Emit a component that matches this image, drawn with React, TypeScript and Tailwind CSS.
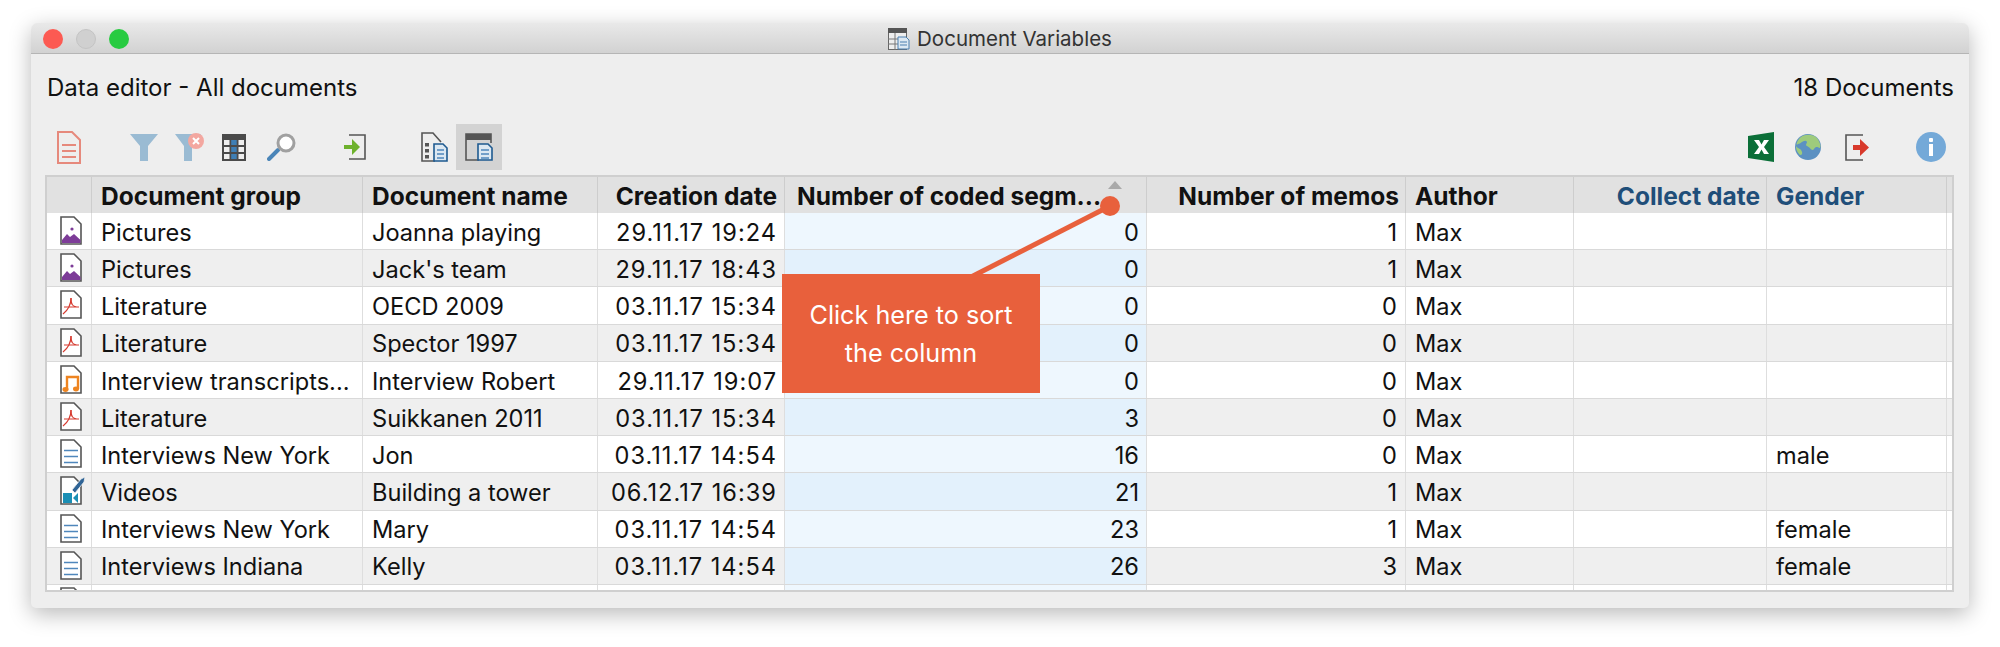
import React from "react";

type Kind = "picture" | "pdf" | "audio" | "text" | "video";

type Row = {
  kind: Kind;
  group: string;
  name: string;
  date: string;
  coded: number;
  memos: number;
  gender: string;
};

const rows: Row[] = [
  { kind: "picture", group: "Pictures", name: "Joanna playing", date: "29.11.17 19:24", coded: 0, memos: 1, gender: "" },
  { kind: "picture", group: "Pictures", name: "Jack's team", date: "29.11.17 18:43", coded: 0, memos: 1, gender: "" },
  { kind: "pdf", group: "Literature", name: "OECD 2009", date: "03.11.17 15:34", coded: 0, memos: 0, gender: "" },
  { kind: "pdf", group: "Literature", name: "Spector 1997", date: "03.11.17 15:34", coded: 0, memos: 0, gender: "" },
  { kind: "audio", group: "Interview transcripts...", name: "Interview Robert", date: "29.11.17 19:07", coded: 0, memos: 0, gender: "" },
  { kind: "pdf", group: "Literature", name: "Suikkanen 2011", date: "03.11.17 15:34", coded: 3, memos: 0, gender: "" },
  { kind: "text", group: "Interviews New York", name: "Jon", date: "03.11.17 14:54", coded: 16, memos: 0, gender: "male" },
  { kind: "video", group: "Videos", name: "Building a tower", date: "06.12.17 16:39", coded: 21, memos: 1, gender: "" },
  { kind: "text", group: "Interviews New York", name: "Mary", date: "03.11.17 14:54", coded: 23, memos: 1, gender: "female" },
  { kind: "text", group: "Interviews Indiana", name: "Kelly", date: "03.11.17 14:54", coded: 26, memos: 3, gender: "female" },
];

const FileIcon = ({ kind }: { kind: Kind }) => (
  <svg width="26" height="30" viewBox="0 0 26 30" fill="none" className="overflow-visible">
    <path d="M1 1H14L21 8V28H1Z" fill="#fff" stroke="#555" strokeWidth="1.6" />
    {kind === "picture" && (
      <>
        <path d="M2 27V24L7 18L10 21L14 18L20.5 24V27Z" fill="#7D3C98" />
        <circle cx="12" cy="13" r="1.6" fill="#7D3C98" />
      </>
    )}
    {kind === "pdf" && (
      <>
        <path d="M11 8C11 14 12 17 19 17H4" stroke="#D63A2F" strokeWidth="1.2" />
        <path d="M11 8C11 15 8 20 3 24" stroke="#D63A2F" strokeWidth="1.2" />
      </>
    )}
    {kind === "audio" && (
      <>
        <path d="M7 25V12H18V24" stroke="#EE8420" strokeWidth="2.4" />
        <ellipse cx="5.5" cy="24.5" rx="3" ry="2.4" fill="#EE8420" />
        <ellipse cx="16" cy="24" rx="3" ry="2.4" fill="#EE8420" />
      </>
    )}
    {kind === "text" && (
      <path d="M4 11.5H18M4 17.5H18M4 23.5H18" stroke="#4F87BC" strokeWidth="1.5" />
    )}
    {kind === "video" && (
      <>
        <path d="M3 17H12V27H3Z" fill="#1B8FB5" />
        <path d="M13 22L18 17V27Z" fill="#1B8FB5" />
        <path d="M12 14L21 3L25 1L24 6L15 17Z" fill="#2F6496" stroke="#EFEFEF" strokeWidth="0.8" />
      </>
    )}
  </svg>
);

const DocRed = () => (
  <svg width="24" height="33" viewBox="0 0 24 33" fill="none">
    <path d="M1 1H15L23 9V32H1Z" stroke="#E6897C" strokeWidth="2" />
    <path d="M5 14H19M5 20H19M5 26H19" stroke="#E6897C" strokeWidth="2" />
  </svg>
);

const FilterIcon = () => (
  <svg width="28" height="27" viewBox="0 0 28 27">
    <path d="M0 0H28L18 12V27H10V12Z" fill="#9ABBD3" />
  </svg>
);

const FilterClearIcon = () => (
  <svg width="29" height="28" viewBox="0 0 29 28">
    <path d="M0 1H26L17 13V28H9V13Z" fill="#9ABBD3" />
    <circle cx="21" cy="8" r="8" fill="#F3A7A0" />
    <path d="M18 5L24 11M24 5L18 11" stroke="#fff" strokeWidth="2" />
  </svg>
);

const GridIcon = () => (
  <svg width="24" height="27" viewBox="0 0 24 27">
    <rect width="24" height="27" fill="#4A4A4A" />
    <rect x="2" y="6" width="5.5" height="5" fill="#EEE" />
    <rect x="9.2" y="6" width="5.5" height="5" fill="#3F7FB5" />
    <rect x="16.5" y="6" width="5.5" height="5" fill="#EEE" />
    <rect x="2" y="13" width="5.5" height="5" fill="#EEE" />
    <rect x="9.2" y="13" width="5.5" height="5" fill="#3F7FB5" />
    <rect x="16.5" y="13" width="5.5" height="5" fill="#EEE" />
    <rect x="2" y="20" width="5.5" height="5" fill="#EEE" />
    <rect x="9.2" y="20" width="5.5" height="5" fill="#3F7FB5" />
    <rect x="16.5" y="20" width="5.5" height="5" fill="#EEE" />
  </svg>
);

const SearchIcon = () => (
  <svg width="29" height="28" viewBox="0 0 29 28" fill="none">
    <path d="M2 26L11 17" stroke="#4A85B8" strokeWidth="4" strokeLinecap="round" />
    <circle cx="19" cy="10" r="8" fill="#fff" stroke="#A0A0A0" strokeWidth="3" />
  </svg>
);

const ImportIcon = () => (
  <svg width="22" height="26" viewBox="0 0 22 26" fill="none">
    <path d="M5 1H21V25H5" stroke="#555" strokeWidth="1.6" />
    <path d="M0 11H8V5L16 13L8 21V15H0Z" fill="#6DB12C" />
  </svg>
);

const DocVarIcon = () => (
  <svg width="27" height="30" viewBox="0 0 27 30" fill="none">
    <path d="M14 29H1V1H12L20 10" stroke="#555" strokeWidth="1.6" />
    <rect x="4" y="11" width="4" height="3.5" fill="#555" />
    <rect x="4" y="17" width="4" height="3.5" fill="#555" />
    <rect x="4" y="23" width="4" height="3.5" fill="#555" />
    <path d="M13 12H22L26 16V29H13Z" fill="#DCE8F2" stroke="#1E5A90" strokeWidth="1.6" />
    <path d="M16 18H23M16 22H23M16 26H23" stroke="#4F87BC" strokeWidth="1.5" />
  </svg>
);

const PanelIcon = () => (
  <svg width="28" height="28" viewBox="0 0 28 28" fill="none">
    <path d="M14 27H1V1H26V10" stroke="#555" strokeWidth="1.6" />
    <rect x="1" y="1" width="25" height="6" fill="#555" />
    <path d="M13 11H23L27 15V27H13Z" fill="#DCE8F2" stroke="#1E5A90" strokeWidth="1.6" />
    <path d="M16 17H24M16 21H24M16 25H24" stroke="#4F87BC" strokeWidth="1.5" />
  </svg>
);

const ExcelIcon = () => (
  <svg width="26" height="30" viewBox="0 0 26 30">
    <path d="M0 4L26 0V30L0 26Z" fill="#0B6F38" />
    <path d="M6 8L11 8L13.5 12.5L16 8L21 8L16 15L21 22H16L13.5 17.5L11 22H6L11 15Z" fill="#fff" />
  </svg>
);

const GlobeIcon = () => (
  <svg width="26" height="26" viewBox="0 0 26 26">
    <circle cx="13" cy="13" r="13" fill="#5C91C2" />
    <path d="M6 3C10 0 18 0 22 4C25 8 26 12 25 14C22 13 21 12 19 15C17 18 15 13 12 12C9 11 14 8 11 7C8 6 6 10 3 10C0 13 2 6 6 3Z" fill="#9ECB7C" />
    <path d="M1 12C3 15 6 14 7 18C8 21 5 22 4 20C2 18 1 15 1 12Z" fill="#9ECB7C" />
  </svg>
);

const ExportIcon = () => (
  <svg width="24" height="27" viewBox="0 0 24 27" fill="none">
    <path d="M18 1H1V26H18" stroke="#555" strokeWidth="1.6" />
    <path d="M8 11H15V5L24 13.5L15 22V16H8Z" fill="#D8392B" />
  </svg>
);

const InfoIcon = () => (
  <svg width="30" height="30" viewBox="0 0 30 30">
    <circle cx="15" cy="15" r="15" fill="#74A9D8" />
    <rect x="13" y="6" width="4" height="4" rx="1" fill="#fff" />
    <rect x="13" y="12" width="4" height="12" fill="#fff" />
  </svg>
);

const TableGridIcon = () => (
  <svg width="22" height="22" viewBox="0 0 22 22" fill="none">
    <rect x="0.5" y="0.5" width="18" height="21" fill="#EEE" stroke="#666" />
    <rect x="0" y="0" width="19" height="5" fill="#555" />
    <path d="M0 11H19M0 16H19M7 5V22" stroke="#777" />
    <path d="M10 9H18L21 12V21H10Z" fill="#DCE8F2" stroke="#4A7FAF" />
    <path d="M12 14H19M12 17H19" stroke="#4A7FAF" />
  </svg>
);

export default function App() {
  return (
    <div className="h-[647px] w-[2000px] overflow-hidden bg-white pl-[31px] pt-[23px] font-['Inter','Liberation_Sans',sans-serif] text-[#111]">
      <div className="relative h-[585px] w-[1938px] rounded-t-[7px] rounded-b-[5px] bg-[#eeeeee] shadow-[0_6px_22px_rgba(0,0,0,0.28)]">
        {/* title bar */}
        <div className="relative flex h-[31px] items-center justify-center rounded-t-[7px] border-b border-[#b5b5b5] bg-gradient-to-b from-[#e9e9e9] to-[#d2d2d2] pt-[2px] text-[20.5px] text-[#333]">
          <div className="absolute left-[12px] top-[6px] flex gap-[13px]">
            <span className="h-[20px] w-[20px] rounded-full bg-[#fc5a52]" />
            <span className="h-[20px] w-[20px] rounded-full border border-[#c4c4c4] bg-[#d0d0d0]" />
            <span className="h-[20px] w-[20px] rounded-full bg-[#28cb41]" />
          </div>
          <span className="mr-[7px]"><TableGridIcon /></span>
          <span>Document Variables</span>
        </div>

        <div className="flex h-[62px] items-center justify-between pl-[16px] pr-[15px] pt-[5px] text-[24px]">
          <span>Data editor - All documents</span>
          <span>18 Documents</span>
        </div>

        {/* toolbar */}
        <div className="mt-[8px] flex h-[46px] items-center text-[0px]">
          <div className="ml-[26px] flex items-center">
            <DocRed />
            <span className="ml-[49px]"><FilterIcon /></span>
            <span className="ml-[17px]"><FilterClearIcon /></span>
            <span className="ml-[18px]"><GridIcon /></span>
            <span className="ml-[21px]"><SearchIcon /></span>
            <span className="ml-[48px]"><ImportIcon /></span>
            <span className="ml-[55px]"><DocVarIcon /></span>
            <span className="ml-[8px] flex h-[46px] w-[46px] items-center justify-center bg-[#d3d3d3]"><PanelIcon /></span>
          </div>
          <div className="ml-auto flex items-center pr-[23px]">
            <ExcelIcon />
            <span className="ml-[21px]"><GlobeIcon /></span>
            <span className="ml-[24px]"><ExportIcon /></span>
            <span className="ml-[47px]"><InfoIcon /></span>
          </div>
        </div>

        {/* table */}
        <div className="ml-[14px] mt-[5px] h-[417px] w-[1909px] overflow-hidden border-2 border-[#cfcfcf] bg-white text-[23.6px] leading-none">
          <div className="flex h-[36px] bg-[#e1e1e1] text-[24.5px] font-bold">
            <div className="w-[45px] border-r border-[#cdcdcd]" />
            <div className="flex w-[271px] items-center whitespace-nowrap border-r border-[#cdcdcd] pl-[9px] pt-[2px]">Document group</div>
            <div className="flex w-[235px] items-center whitespace-nowrap border-r border-[#cdcdcd] pl-[9px] pt-[2px]">Document name</div>
            <div className="flex w-[187px] items-center justify-end whitespace-nowrap border-r border-[#cdcdcd] pr-[7px] pt-[2px]">Creation date</div>
            <div className="relative flex w-[362px] items-center whitespace-nowrap border-r border-[#cdcdcd] pl-[12px] pt-[2px]">
              Number of coded segm...
              <span className="absolute right-[24px] top-[4px] h-0 w-0 border-x-[7px] border-b-[8px] border-x-transparent border-b-[#a9a9a9]" />
            </div>
            <div className="flex w-[259px] items-center justify-end whitespace-nowrap border-r border-[#cdcdcd] pr-[6px] pt-[2px]">Number of memos</div>
            <div className="flex w-[168px] items-center border-r border-[#cdcdcd] pl-[9px] pt-[2px]">Author</div>
            <div className="flex w-[193px] items-center justify-end whitespace-nowrap border-r border-[#cdcdcd] pr-[6px] pt-[2px] text-[#1f4e79]">Collect date</div>
            <div className="flex w-[180px] items-center border-r border-[#cdcdcd] pl-[9px] pt-[2px] text-[#1f4e79]">Gender</div>
          </div>

          {rows.map((row, i) => (
            <div
              key={row.name}
              className={`flex h-[37.2px] border-b border-[#d9d9d9] ${i % 2 === 1 ? "bg-[#efefef]" : "bg-white"}`}
            >
              <div className="flex w-[45px] items-center border-r border-[#dedede] pl-[13px]">
                <FileIcon kind={row.kind} />
              </div>
              <div className="flex w-[271px] items-center whitespace-nowrap border-r border-[#dedede] pl-[9px] pt-[3px]">{row.group}</div>
              <div className="flex w-[235px] items-center whitespace-nowrap border-r border-[#dedede] pl-[9px] pt-[3px]">{row.name}</div>
              <div className="flex w-[187px] items-center justify-end whitespace-nowrap border-r border-[#dedede] pr-[7px] pt-[3px] tracking-[1px]">{row.date}</div>
              <div className={`flex w-[362px] items-center justify-end border-r border-[#dedede] pr-[7px] pt-[3px] ${i % 2 === 1 ? "bg-[#e3f1fc]" : "bg-[#eef7fe]"}`}>{row.coded}</div>
              <div className="flex w-[259px] items-center justify-end border-r border-[#dedede] pr-[8px] pt-[3px]">{row.memos}</div>
              <div className="flex w-[168px] items-center border-r border-[#dedede] pl-[9px] pt-[3px]">Max</div>
              <div className="w-[193px] border-r border-[#dedede]" />
              <div className="flex w-[180px] items-center border-r border-[#dedede] pl-[9px] pt-[3px]">{row.gender}</div>
            </div>
          ))}
          <div className="flex h-[10px] overflow-hidden">
            <div className="w-[45px] border-r border-[#dedede] pl-[13px] pt-[2px]"><FileIcon kind="text" /></div>
            <div className="w-[271px] border-r border-[#dedede]" />
            <div className="w-[235px] border-r border-[#dedede]" />
            <div className="w-[187px] border-r border-[#dedede]" />
            <div className="w-[362px] border-r border-[#dedede] bg-[#eef7fe]" />
            <div className="w-[259px] border-r border-[#dedede]" />
            <div className="w-[168px] border-r border-[#dedede]" />
            <div className="w-[193px] border-r border-[#dedede]" />
            <div className="w-[180px] border-r border-[#dedede]" />
          </div>
        </div>

        {/* callout */}
        <svg className="absolute left-[930px] top-[170px]" width="160" height="90" viewBox="0 0 160 90" fill="none">
          <path d="M10 84L149 13" stroke="#e8603c" strokeWidth="5" />
          <circle cx="149" cy="13" r="10" fill="#e8603c" />
        </svg>
        <div className="absolute left-[751px] top-[251px] flex h-[119px] w-[258px] items-center justify-center bg-[#e8603c] text-center text-[25.2px] leading-[38px] text-white">
          <span>Click here to sort<br />the column</span>
        </div>
      </div>
    </div>
  );
}
